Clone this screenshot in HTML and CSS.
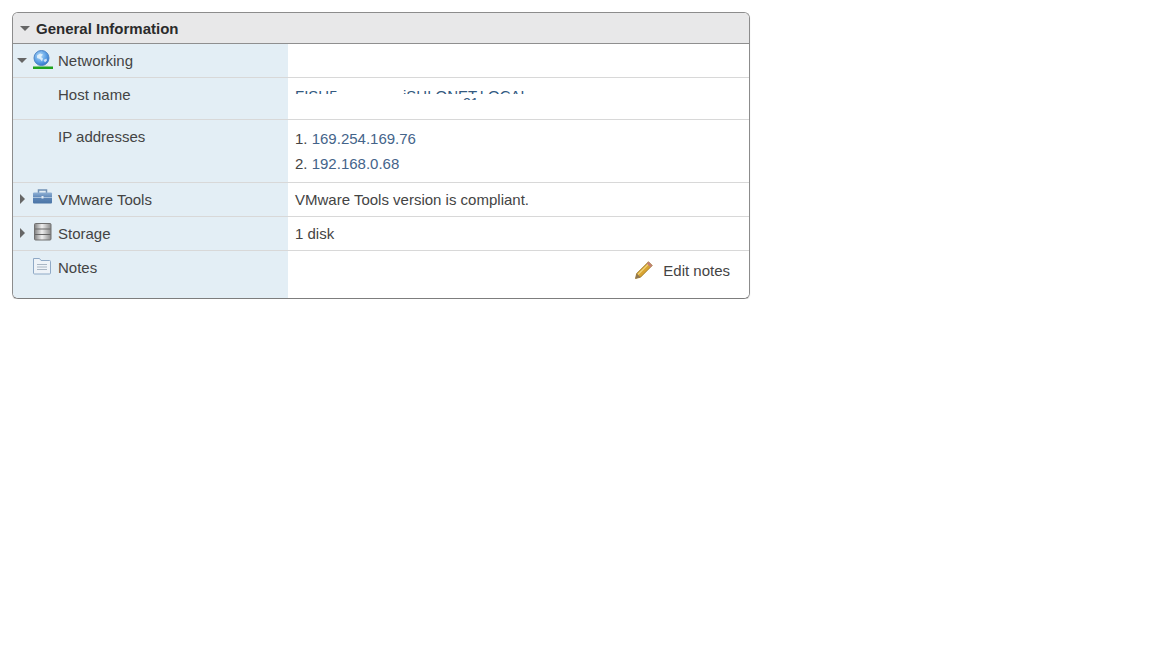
FILE: index.html
```html
<!DOCTYPE html>
<html lang="en">
<head>
    <meta charset="UTF-8">
    <title>General Information</title>
    <link rel="stylesheet" href="styles.css">
</head>
<body>
<div class="panel">
    <div class="panel-header">
        <span class="caret caret-open"></span>
        <h2>General Information</h2>
    </div>

    <div class="row row-networking">
        <div class="label">
            <span class="caret caret-open"></span>
            <svg class="icon" width="22" height="22" viewBox="0 0 22 22">
                <defs>
                    <radialGradient id="globe" cx="0.4" cy="0.35" r="0.7">
                        <stop offset="0" stop-color="#b5dcf8"/>
                        <stop offset="0.6" stop-color="#5b9fe4"/>
                        <stop offset="1" stop-color="#2f6fc4"/>
                    </radialGradient>
                </defs>
                <rect x="7" y="14" width="7" height="2" fill="#c3c9cf"/>
                <rect x="5" y="15" width="11" height="1.500" fill="#dfe3e6"/>
                <circle cx="9.500" cy="8" r="7.500" fill="url(#globe)" stroke="#4f86c6" stroke-width="1"/>
                <path d="M5 5.500l3-2 3 1-2 2.500 2 1.500-1 3-2-2.500-3-1z" fill="#e8f3fc" opacity="0.85"/>
                <path d="M11.500 10l3-1.500 0.500 2-2 2z" fill="#e8f3fc" opacity="0.8"/>
                <rect x="1" y="16.500" width="20" height="2.500" fill="#1fa31f"/>
            </svg>
            <span>Networking</span>
        </div>
        <div class="value"></div>
    </div>

    <div class="row row-host">
        <div class="label label-sub">Host name</div>
        <div class="value value-host">
            <div class="clip-line"><span class="gap-a">FISH5</span><span>iSHLONET.LOCAL</span></div>
            <div class="clip-frag">21</div>
        </div>
    </div>

    <div class="row row-ip">
        <div class="label label-sub">IP addresses</div>
        <div class="value value-ip">
            <div>1. <a href="#">169.254.169.76</a></div>
            <div>2. <a href="#">192.168.0.68</a></div>
        </div>
    </div>

    <div class="row">
        <div class="label">
            <span class="caret caret-closed"></span>
            <svg class="icon" width="22" height="16" viewBox="0 0 22 16">
                <defs>
                    <linearGradient id="box" x1="0" y1="0" x2="0" y2="1">
                        <stop offset="0" stop-color="#8fb0d4"/>
                        <stop offset="0.45" stop-color="#5f88b8"/>
                        <stop offset="1" stop-color="#4a74a6"/>
                    </linearGradient>
                </defs>
                <path d="M6.500 4V1h8V4" fill="none" stroke="#7191b5" stroke-width="1.500"/>
                <rect x="1" y="3.500" width="19" height="11" rx="1" fill="url(#box)"/>
                <rect x="1" y="8" width="19" height="1" fill="#a9c1da"/>
                <rect x="9.500" y="7" width="2" height="2.500" fill="#e2ebf4"/>
            </svg>
            <span>VMware Tools</span>
        </div>
        <div class="value">VMware Tools version is compliant.</div>
    </div>

    <div class="row">
        <div class="label">
            <span class="caret caret-closed"></span>
            <svg class="icon" width="22" height="18" viewBox="0 0 22 18">
                <defs>
                    <linearGradient id="disk" x1="0" y1="0" x2="1" y2="0">
                        <stop offset="0" stop-color="#808080"/>
                        <stop offset="0.45" stop-color="#efefef"/>
                        <stop offset="1" stop-color="#8a8a8a"/>
                    </linearGradient>
                </defs>
                <rect x="2.500" y="0.500" width="16.500" height="16.500" rx="1" fill="url(#disk)" stroke="#707070"/>
                <path d="M3 6h15.500M3 11.500h15.500" stroke="#666" stroke-width="1"/>
            </svg>
            <span>Storage</span>
        </div>
        <div class="value">1 disk</div>
    </div>

    <div class="row row-notes">
        <div class="label">
            <span class="caret-spacer"></span>
            <svg class="icon" width="22" height="18" viewBox="0 0 22 18">
                <path d="M1.500 3V1.500h6l1.500 2h8.500a1 1 0 0 1 1 1V16a1 1 0 0 1-1 1H2.500a1 1 0 0 1-1-1z" fill="#eef3f8" stroke="#8fa9c6"/>
                <path d="M5 7.500h10M5 10h10M5 12.500h10" stroke="#a9b6c4" stroke-width="1"/>
            </svg>
            <span>Notes</span>
        </div>
        <div class="value value-notes">
            <a class="edit-link" href="#">
                <svg width="20" height="20" viewBox="0 0 20 20">
                    <path d="M1.500 18.500l1.200-5L14.500 1.800l3.700 3.700L6.500 17.200z" fill="#d9a431" stroke="#94701f" stroke-width="0.800"/>
                    <path d="M4 14.500L15.500 3" stroke="#f0d27a" stroke-width="1.300"/>
                    <path d="M14.500 1.800l3.700 3.700-1.700 1.700-3.700-3.700z" fill="#c07f78"/>
                    <path d="M1.500 18.500l1.200-5 3.800 3.700z" fill="#8f7754"/>
                </svg>
                <span>Edit notes</span>
            </a>
        </div>
    </div>
</div>
</body>
</html>
```

FILE: styles.css
```css
body {
    margin: 12px;
    background: #fff;
    font-family: "Liberation Sans", Arial, sans-serif;
    font-size: 15px;
    color: #444;
}
.panel {
    width: 736px;
    border: 1px solid #8c8c8c;
    border-bottom-color: #7d7d7d;
    border-radius: 6px;
    overflow: hidden;
    box-shadow: 0 1px 1px #ccc;
}
.panel-header {
    height: 30px;
    display: flex;
    align-items: center;
    padding-left: 7px;
    background: #e8e8e9;
    border-bottom: 1px solid #8f8f8f;
}
.panel-header h2 {
    margin: 0 0 0 6px;
    font-size: 15px;
    font-weight: bold;
    color: #2b2b2b;
}
.row {
    display: grid;
    grid-template-columns: 275px 1fr;
    height: 33px;
    border-bottom: 1px solid #d8d8d8;
}
.row-host {
    height: 41px;
}
.row-ip {
    height: 62px;
}
.row-notes {
    height: 47px;
    border-bottom: none;
}
.label {
    display: flex;
    align-items: flex-start;
    padding: 8px 0 0 4px;
    background: #e3eef5;
    line-height: 17px;
}
.label-sub {
    padding-left: 45px;
}
.value {
    padding: 8px 0 0 7px;
    line-height: 17px;
    background: #fff;
}
.caret {
    flex: none;
    width: 0;
    height: 0;
    border-style: solid;
}
.caret-open {
    border-width: 5px 5px 0 5px;
    border-color: #666 transparent transparent transparent;
}
.label .caret-open {
    margin: 6px 0 0 0;
}
.caret-closed {
    border-width: 5px 0 5px 5px;
    border-color: transparent transparent transparent #666;
    margin: 3px 2px 0 3px;
}
.caret-spacer {
    flex: none;
    width: 10px;
}
.icon {
    flex: none;
    margin: -2px 4px 0 5px;
}
.value-host {
    position: relative;
    padding: 0;
}
.clip-line {
    position: absolute;
    left: 7px;
    top: 9px;
    height: 7px;
    width: 300px;
    overflow: hidden;
    white-space: nowrap;
    font-size: 15px;
    line-height: 17px;
    color: #33597f;
}
.gap-a {
    display: inline-block;
    width: 108px;
}
.clip-frag {
    position: absolute;
    left: 175px;
    top: 18px;
    height: 4px;
    overflow: hidden;
    font-size: 14px;
    line-height: 14px;
    color: #33597f;
}
.value-ip {
    padding-top: 6px;
    line-height: 25px;
}
.value-ip a {
    color: #44648a;
    text-decoration: none;
}
.value-notes {
    display: flex;
    justify-content: flex-end;
    padding: 9px 19px 0 0;
}
.edit-link {
    display: flex;
    align-items: center;
    gap: 9px;
    height: 20px;
    color: #444;
    text-decoration: none;
}
```
